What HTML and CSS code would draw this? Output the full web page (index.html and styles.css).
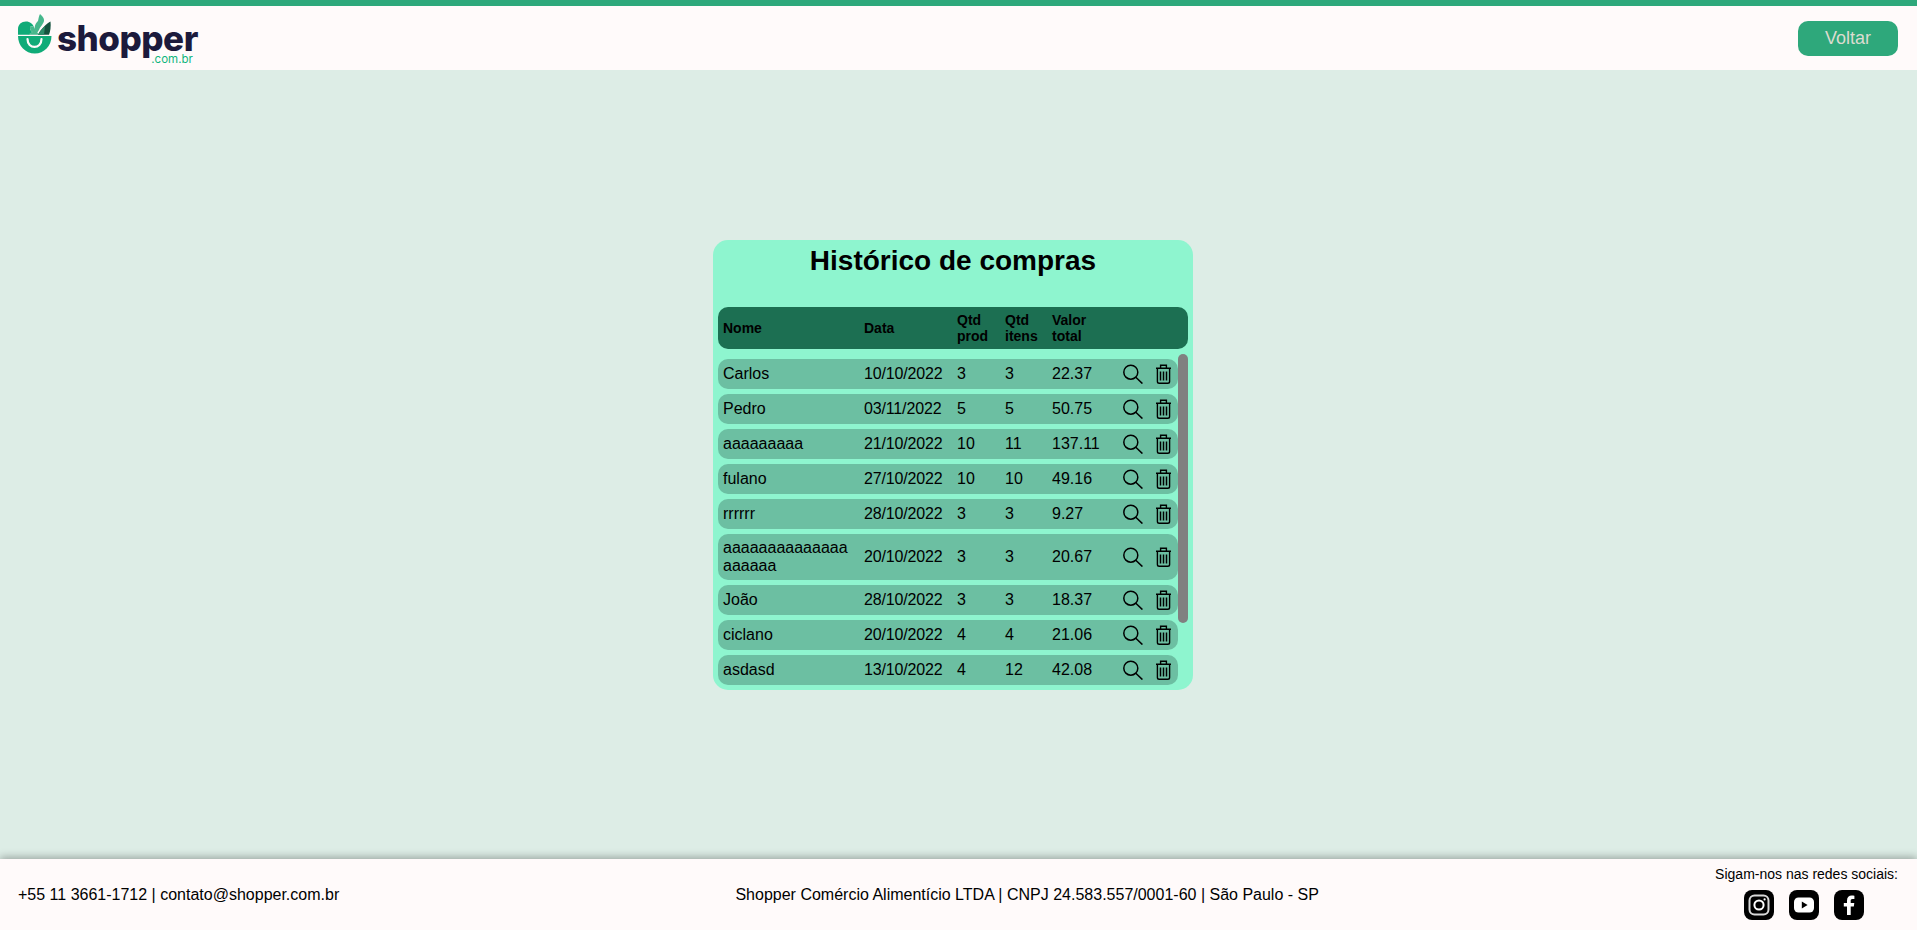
FILE: index.html
```html
<!DOCTYPE html>
<html lang="pt-BR">
<head>
  <meta charset="UTF-8">
  <meta name="viewport" content="width=device-width, initial-scale=1.0">
  <title>Shopper - Histórico de compras</title>
  <link rel="stylesheet" href="styles.css">
</head>
<body>
  <svg class="icon-defs" width="0" height="0" aria-hidden="true">
    <symbol id="icon-search" viewBox="0 0 20 20">
      <circle cx="7.8" cy="8.2" r="7" fill="none" stroke="currentColor" stroke-width="1.5"/>
      <path d="M12.8 13.2 L19.4 19.6" fill="none" stroke="currentColor" stroke-width="1.5"/>
    </symbol>
    <symbol id="icon-trash" viewBox="0 0 17 20">
      <path d="M1 4.2 H16 M5.6 4 V1.2 H11.4 V4 M2.4 4.6 V17.4 Q2.4 19.2 4.2 19.2 H12.8 Q14.6 19.2 14.6 17.4 V4.6" fill="none" stroke="currentColor" stroke-width="1.4"/>
      <path d="M5.5 7.5 V16.5 M8.5 7.5 V16.5 M11.5 7.5 V16.5" fill="none" stroke="currentColor" stroke-width="1.5"/>
    </symbol>
  </svg>

  <header class="topbar">
    <a class="logo" href="#">
      <svg class="logo-mark" viewBox="0 0 34 40" width="34" height="40">
        <path d="M0 15 C0 10.5 3.5 7.5 8 7.5 C12 7.5 15 10 16 13 C14 11.5 12 12 12 14 C12 15.5 13 17 14.5 18 L11 20.7 L0 20.7 Z" fill="#10ab78"/>
        <path d="M12 14 C12 12 14 11.5 16 13 C17 15 18 17 21 20.7 L9 20.7 C11 20 13 19 14.5 18 C13 17 12 15.5 12 14 Z" fill="#47b78c"/>
        <path d="M17.5 17 C15.5 12 18 9 20 7 C20.5 4.5 21 2 22 0 C24 2 26.5 4 26 7 C25.5 10 22.5 12 21 16 L19 19 Z" fill="#47b78c"/>
        <path d="M20 20.7 C23 15 28 10 32.5 7.5 C33 12 32.5 17 31 20.7 Z" fill="#14523e"/>
        <path d="M20 20.7 C22 17 24.5 14 27 12 L26 20.7 Z" fill="#2b8a68"/>
        <path d="M0 22 H33.5 C33.5 32 26 39.5 16.8 39.5 C7.5 39.5 0 32 0 22 Z" fill="#10ab78"/>
        <path d="M9.5 25 C9.5 35.5 23.5 35.5 23.5 25" fill="none" stroke="#fffafa" stroke-width="2.2" stroke-linecap="round"/>
      </svg>
      <span class="logo-text">
        <span class="logo-name">shopper</span>
        <span class="logo-domain">.com.br</span>
      </span>
    </a>
    <button class="btn-back">Voltar</button>
  </header>

  <main class="content">
    <section class="card">
      <h2>Histórico de compras</h2>
      <div class="table-head">
        <div>Nome</div>
        <div>Data</div>
        <div>Qtd<br>prod</div>
        <div>Qtd<br>itens</div>
        <div>Valor<br>total</div>
      </div>
      <div class="table-wrap">
        <div class="table-body">
          <div class="row">
            <div class="name">Carlos</div><div>10/10/2022</div><div>3</div><div>3</div><div>22.37</div>
            <div class="actions"><svg class="ic-search"><use href="#icon-search"/></svg><svg class="ic-trash"><use href="#icon-trash"/></svg></div>
          </div>
          <div class="row">
            <div class="name">Pedro</div><div>03/11/2022</div><div>5</div><div>5</div><div>50.75</div>
            <div class="actions"><svg class="ic-search"><use href="#icon-search"/></svg><svg class="ic-trash"><use href="#icon-trash"/></svg></div>
          </div>
          <div class="row">
            <div class="name">aaaaaaaaa</div><div>21/10/2022</div><div>10</div><div>11</div><div>137.11</div>
            <div class="actions"><svg class="ic-search"><use href="#icon-search"/></svg><svg class="ic-trash"><use href="#icon-trash"/></svg></div>
          </div>
          <div class="row">
            <div class="name">fulano</div><div>27/10/2022</div><div>10</div><div>10</div><div>49.16</div>
            <div class="actions"><svg class="ic-search"><use href="#icon-search"/></svg><svg class="ic-trash"><use href="#icon-trash"/></svg></div>
          </div>
          <div class="row">
            <div class="name">rrrrrr</div><div>28/10/2022</div><div>3</div><div>3</div><div>9.27</div>
            <div class="actions"><svg class="ic-search"><use href="#icon-search"/></svg><svg class="ic-trash"><use href="#icon-trash"/></svg></div>
          </div>
          <div class="row">
            <div class="name">aaaaaaaaaaaaaaaaaaaa</div><div>20/10/2022</div><div>3</div><div>3</div><div>20.67</div>
            <div class="actions"><svg class="ic-search"><use href="#icon-search"/></svg><svg class="ic-trash"><use href="#icon-trash"/></svg></div>
          </div>
          <div class="row">
            <div class="name">João</div><div>28/10/2022</div><div>3</div><div>3</div><div>18.37</div>
            <div class="actions"><svg class="ic-search"><use href="#icon-search"/></svg><svg class="ic-trash"><use href="#icon-trash"/></svg></div>
          </div>
          <div class="row">
            <div class="name">ciclano</div><div>20/10/2022</div><div>4</div><div>4</div><div>21.06</div>
            <div class="actions"><svg class="ic-search"><use href="#icon-search"/></svg><svg class="ic-trash"><use href="#icon-trash"/></svg></div>
          </div>
          <div class="row">
            <div class="name">asdasd</div><div>13/10/2022</div><div>4</div><div>12</div><div>42.08</div>
            <div class="actions"><svg class="ic-search"><use href="#icon-search"/></svg><svg class="ic-trash"><use href="#icon-trash"/></svg></div>
          </div>
        </div>
        <div class="scroll-thumb"></div>
      </div>
    </section>
  </main>

  <footer class="footer">
    <div>+55 11 3661-1712 | contato@shopper.com.br</div>
    <div>Shopper Comércio Alimentício LTDA | CNPJ 24.583.557/0001-60 | São Paulo - SP</div>
    <div class="social">
      <span class="social-label">Sigam-nos nas redes sociais:</span>
      <div class="social-icons">
        <a class="social-icon" href="#">
          <svg viewBox="0 0 30 30" width="30" height="30">
            <rect x="5.5" y="5.5" width="19" height="19" rx="5" fill="none" stroke="#d8d8d8" stroke-width="2"/>
            <circle cx="15" cy="15" r="4.6" fill="none" stroke="#fff" stroke-width="2"/>
            <circle cx="20.6" cy="9.4" r="1.1" fill="#fff"/>
          </svg>
        </a>
        <a class="social-icon" href="#">
          <svg viewBox="0 0 30 30" width="30" height="30">
            <rect x="5" y="7.5" width="20" height="15" rx="4.5" fill="#fff"/>
            <path d="M12.8 11.5 L18.6 15 L12.8 18.5 Z" fill="#000"/>
          </svg>
        </a>
        <a class="social-icon" href="#">
          <svg viewBox="0 0 30 30" width="30" height="30">
            <path d="M13 25 V16.6 H9.8 V13 H13 V10.4 C13 7.2 15 5.5 17.7 5.5 C19 5.5 20 5.6 20.4 5.7 V8.9 H18.5 C17 8.9 16.7 9.6 16.7 10.7 V13 H20.3 L19.8 16.6 H16.7 V25 Z" fill="#fff"/>
          </svg>
        </a>
      </div>
    </div>
  </footer>
</body>
</html>
```
FILE: styles.css
```css
:root {
  --green: #2ea87b;
  --paper: #fffafa;
  --page-bg: #ddede6;
  --card-bg: #8ef5cf;
  --head-bg: #1c6f52;
  --row-bg: #6cbfa2;
}

* {
  box-sizing: border-box;
  margin: 0;
  padding: 0;
}

body {
  font-family: "Liberation Sans", Arial, sans-serif;
  background: var(--page-bg);
  color: #000;
  display: flex;
  flex-direction: column;
  height: 100vh;
  overflow: hidden;
}

.icon-defs {
  position: absolute;
}

.topbar {
  height: 70px;
  flex: none;
  background: var(--paper);
  border-top: 6px solid var(--green);
  display: flex;
  align-items: center;
  justify-content: space-between;
  padding: 0 19px 0 18px;
}

.logo {
  display: flex;
  align-items: flex-start;
  text-decoration: none;
  height: 46px;
  margin-top: -2px;
}

.logo-mark {
  flex: none;
  margin-right: 5px;
}

.logo-text {
  display: flex;
  flex-direction: column;
  align-items: flex-end;
  margin-top: 8px;
}

.logo-name {
  font-family: Inter, sans-serif;
  font-weight: 800;
  font-size: 35px;
  line-height: 33px;
  letter-spacing: -0.5px;
  color: #1c1a3c;
}

.logo-domain {
  font-family: Inter, sans-serif;
  font-size: 11.5px;
  line-height: 8px;
  margin-right: 5px;
  color: #10b57c;
}

.btn-back {
  width: 100px;
  height: 35px;
  background: var(--green);
  color: #dcdcd0;
  border: none;
  border-radius: 10px;
  font-family: inherit;
  font-size: 18px;
  cursor: pointer;
}

.content {
  flex: 1;
  display: flex;
  align-items: center;
  justify-content: center;
}

.card {
  width: 480px;
  height: 450px;
  margin-right: 11px;
  padding: 0 5px;
  background: var(--card-bg);
  border-radius: 15px;
  overflow: hidden;
}

.card h2 {
  font-size: 28px;
  line-height: 32px;
  height: 67px;
  padding-top: 5px;
  text-align: center;
}

.table-head,
.row {
  display: grid;
  grid-template-columns: 141px 93px 48px 47px 71px 1fr;
  align-items: center;
  padding-left: 5px;
}

.table-head {
  height: 42px;
  background: var(--head-bg);
  border-radius: 10px;
  font-size: 14px;
  font-weight: 700;
  line-height: 16px;
}

.table-wrap {
  position: relative;
  height: 336px;
  margin-top: 5px;
  padding-right: 10px;
}

.table-body {
  height: 100%;
  padding-top: 5px;
  overflow: hidden;
}

.scroll-thumb {
  position: absolute;
  top: 0;
  right: 0;
  width: 10px;
  height: 269px;
  background: #808080;
  border-radius: 5px;
}

.row {
  min-height: 30px;
  margin-bottom: 5px;
  padding-top: 5px;
  padding-bottom: 5px;
  background: var(--row-bg);
  border-radius: 10px;
  font-size: 16px;
  line-height: 18px;
}

.row > div:nth-child(2) {
  letter-spacing: -0.15px;
}

.name {
  width: 130px;
  word-break: break-all;
}

.actions {
  display: flex;
  gap: 12px;
  height: 20px;
}

.ic-search {
  width: 20px;
  height: 20px;
}

.ic-trash {
  width: 17px;
  height: 20px;
}

.footer {
  height: 71px;
  flex: none;
  background: var(--paper);
  box-shadow: 0 -2px 8px rgba(0, 0, 0, 0.3);
  display: flex;
  align-items: center;
  justify-content: space-between;
  padding: 0 19px 0 18px;
  font-size: 16px;
}

.social {
  display: flex;
  flex-direction: column;
  align-items: center;
  gap: 8px;
  margin-bottom: 3px;
}

.social-label {
  font-size: 14px;
  line-height: 16px;
}

.social-icons {
  display: flex;
  gap: 15px;
  margin-right: 6px;
}

.social-icon {
  display: block;
  width: 30px;
  height: 30px;
  background: #000;
  border-radius: 8px;
}
```
